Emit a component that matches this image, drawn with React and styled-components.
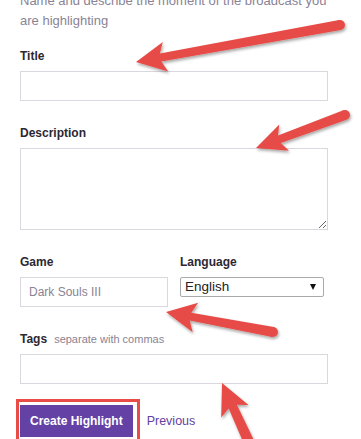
import styled, { createGlobalStyle } from 'styled-components';

const GlobalStyle = createGlobalStyle`
  html, body {
    margin: 0;
    padding: 0;
    background: #fff;
    overflow: hidden;
  }
  body {
    font-family: "Liberation Sans", Arial, sans-serif;
  }
`;

const Page = styled.div`
  position: relative;
  width: 361px;
  height: 439px;
  overflow: hidden;
`;

const Form = styled.form`
  width: 308px;
  padding-left: 20px;
`;

const Intro = styled.p`
  margin: -9.5px 0 17.5px;
  font-size: 13px;
  line-height: 20px;
  color: #898395;
`;

const Field = styled.div`
  margin-bottom: ${p => p.$gap ?? 24}px;
`;

const Label = styled.label`
  display: flex;
  align-items: baseline;
  gap: 7px;
  height: 16px;
  margin-bottom: 7px;
  font-size: 12px;
  line-height: 16px;
  font-weight: bold;
  color: #2c2833;
`;

const Hint = styled.span`
  font-size: 11px;
  font-weight: normal;
  color: #898395;
`;

const TextInput = styled.input`
  display: block;
  box-sizing: border-box;
  width: ${p => p.$width ?? 308}px;
  height: 30px;
  margin: 0;
  padding: 0 8px;
  border: 1px solid #dad8de;
  border-radius: 0;
  outline: none;
  font-family: inherit;
  font-size: 12px;
  color: #19171c;

  &::placeholder {
    color: #898395;
  }
`;

const TextArea = styled.textarea`
  display: block;
  box-sizing: border-box;
  width: 308px;
  height: 82px;
  margin: 0;
  padding: 6px 8px;
  border: 1px solid #dad8de;
  border-radius: 0;
  outline: none;
  resize: vertical;
  font-family: inherit;
  font-size: 12px;
`;

const Row = styled.div`
  display: grid;
  grid-template-columns: 148px 148px;
  column-gap: 12px;
  margin-bottom: 24px;
`;

const SelectWrap = styled.div`
  position: relative;
  width: 144px;

  &::after {
    content: '';
    position: absolute;
    right: 8px;
    top: 7px;
    border-left: 3px solid transparent;
    border-right: 3px solid transparent;
    border-top: 6px solid #111;
    pointer-events: none;
  }
`;

const Select = styled.select`
  display: block;
  box-sizing: border-box;
  width: 144px;
  height: 20px;
  margin: 0;
  padding: 0 0 0 4px;
  border: 1px solid #a9a9a9;
  border-radius: 2px;
  background: #fff;
  appearance: none;
  outline: none;
  font-family: inherit;
  font-size: 13.5px;
  line-height: 18px;
  color: #222;
`;

const Actions = styled.div`
  display: flex;
  align-items: center;
  gap: 14px;
  margin-top: 21px;
`;

const ButtonWrap = styled.div`
  position: relative;
`;

const Highlight = styled.div`
  position: absolute;
  left: -4px;
  top: -6px;
  right: -7px;
  bottom: -14px;
  border: 3px solid #e74c46;
  pointer-events: none;
`;

const PrimaryButton = styled.button`
  display: block;
  height: 32px;
  padding: 0 10px;
  border: none;
  border-radius: 0;
  background: #6441a4;
  color: #fff;
  font-family: inherit;
  font-size: 12px;
  font-weight: bold;
  cursor: pointer;
`;

const LinkButton = styled.a`
  font-size: 12.5px;
  color: #6441a4;
  text-decoration: none;
  cursor: pointer;
`;

const Overlay = styled.svg`
  position: absolute;
  left: 0;
  top: 0;
  pointer-events: none;
`;

const ARROWS = [
  { tip: [136, 62], tail: [340, 25], len: 29, half: 15, wHead: 8, wTail: 10 },
  { tip: [256, 148], tail: [345, 115], len: 29, half: 14, wHead: 8, wTail: 10 },
  { tip: [166, 312], tail: [273, 332], len: 29, half: 15, wHead: 8, wTail: 10 },
  { tip: [222, 383], tail: [264, 475], len: 30, half: 15, wHead: 9, wTail: 12 },
];

function arrowPath({ tip, tail, len, half, wHead, wTail }) {
  const dx = tail[0] - tip[0];
  const dy = tail[1] - tip[1];
  const d = Math.hypot(dx, dy);
  const u = [dx / d, dy / d];
  const n = [-u[1], u[0]];
  const at = (s, t) => [tip[0] + u[0] * s + n[0] * t, tip[1] + u[1] * s + n[1] * t];
  const pts = [
    at(0, 0),
    at(len + 1, half),
    at(len - 4, wHead / 2),
    at(d, wTail / 2),
    at(d, -wTail / 2),
    at(len - 4, -wHead / 2),
    at(len + 1, -half),
  ];
  return 'M' + pts.map(p => p[0].toFixed(1) + ' ' + p[1].toFixed(1)).join(' L') + ' Z';
}

function Arrows() {
  return (
    <Overlay width="361" height="439" viewBox="0 0 361 439">
      <defs>
        <filter id="arrowShadow" x="-20%" y="-20%" width="140%" height="140%">
          <feDropShadow dx="1" dy="2" stdDeviation="1.5" floodColor="#000" floodOpacity="0.35" />
        </filter>
      </defs>
      <g filter="url(#arrowShadow)" fill="#e74c46">
        {ARROWS.map((a, i) => (
          <g key={i}>
            <path d={arrowPath(a)} />
            <circle cx={a.tail[0]} cy={a.tail[1]} r={a.wTail / 2} />
          </g>
        ))}
      </g>
    </Overlay>
  );
}

export default function App() {
  return (
    <Page>
      <GlobalStyle />
      <Form onSubmit={e => e.preventDefault()}>
        <Intro>
          Name and describe the moment of the broadcast you are highlighting
        </Intro>

        <Field>
          <Label>Title</Label>
          <TextInput type="text" />
        </Field>

        <Field>
          <Label>Description</Label>
          <TextArea />
        </Field>

        <Row>
          <div>
            <Label>Game</Label>
            <TextInput type="text" $width={148} placeholder="Dark Souls III" />
          </div>
          <div>
            <Label>Language</Label>
            <SelectWrap>
              <Select defaultValue="en">
                <option value="en">English</option>
              </Select>
            </SelectWrap>
          </div>
        </Row>

        <Field $gap={0}>
          <Label>
            Tags <Hint>separate with commas</Hint>
          </Label>
          <TextInput type="text" />
        </Field>

        <Actions>
          <ButtonWrap>
            <PrimaryButton type="submit">Create Highlight</PrimaryButton>
            <Highlight />
          </ButtonWrap>
          <LinkButton>Previous</LinkButton>
        </Actions>
      </Form>
      <Arrows />
    </Page>
  );
}
